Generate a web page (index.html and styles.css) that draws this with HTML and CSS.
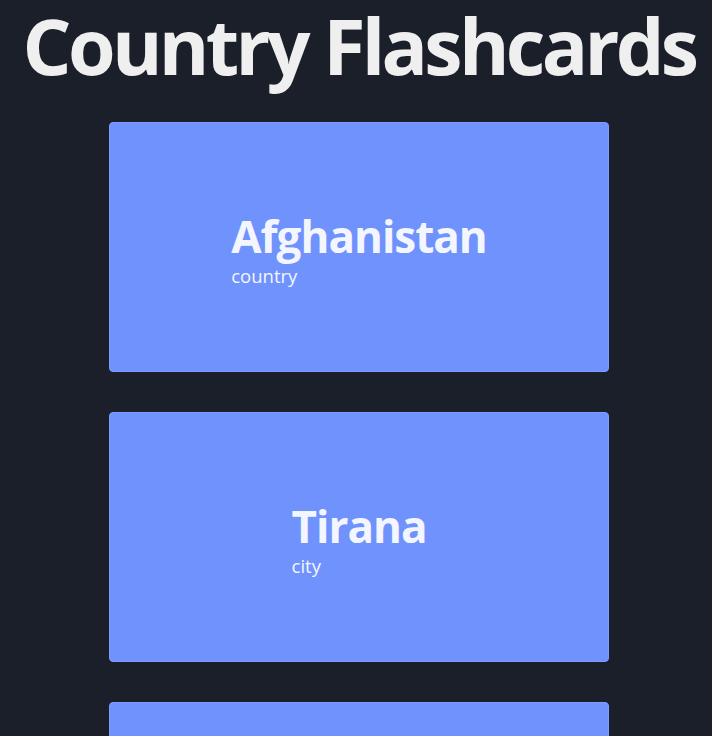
FILE: index.html
```html
<!DOCTYPE html>
<html lang="en">
<head>
<meta charset="utf-8">
<title>Country Flashcards</title>
<link rel="stylesheet" href="styles.css">
</head>
<body>
<main class="app">
  <h1 class="title">Country Flashcards</h1>
  <section class="deck">
    <div class="card">
      <div class="card-body">
        <div class="card-name">Afghanistan</div>
        <div class="card-type">country</div>
      </div>
    </div>
    <div class="card">
      <div class="card-body">
        <div class="card-name">Tirana</div>
        <div class="card-type">city</div>
      </div>
    </div>
    <div class="card">
      <div class="card-body">
        <div class="card-name">Albania</div>
        <div class="card-type">country</div>
      </div>
    </div>
  </section>
</main>
</body>
</html>
```
FILE: styles.css
```css
html, body {
  margin: 0;
  padding: 0;
  background: #1b1f2a;
}
html {
  height: 736px;
  overflow: hidden;
}
body {
  font-family: "Open Sans", "Noto Sans", sans-serif;
  color: #f0f0f0;
}
.app {
  display: flex;
  flex-direction: column;
  align-items: center;
  padding-left: 6px;
}
.title {
  margin: 6px 0 0;
  font-size: 77px;
  line-height: 80px;
  font-weight: 700;
  letter-spacing: -3.7px;
  white-space: nowrap;
  color: #efefef;
}
.deck {
  display: flex;
  flex-direction: column;
  gap: 40px;
  margin-top: 36px;
}
.card {
  box-sizing: border-box;
  width: 500px;
  height: 250px;
  background: #6f92fd;
  border: 1px solid #7c9cff;
  border-radius: 4px;
  display: flex;
  align-items: center;
  justify-content: center;
}
.card-body {
  text-align: left;
  color: #f4f6ff;
  margin-top: 5px;
}
.card-name {
  font-size: 44px;
  line-height: 50px;
  font-weight: 700;
  letter-spacing: -1px;
}
.card-type {
  margin-top: 3px;
  font-size: 18.5px;
  line-height: 24px;
}
```
